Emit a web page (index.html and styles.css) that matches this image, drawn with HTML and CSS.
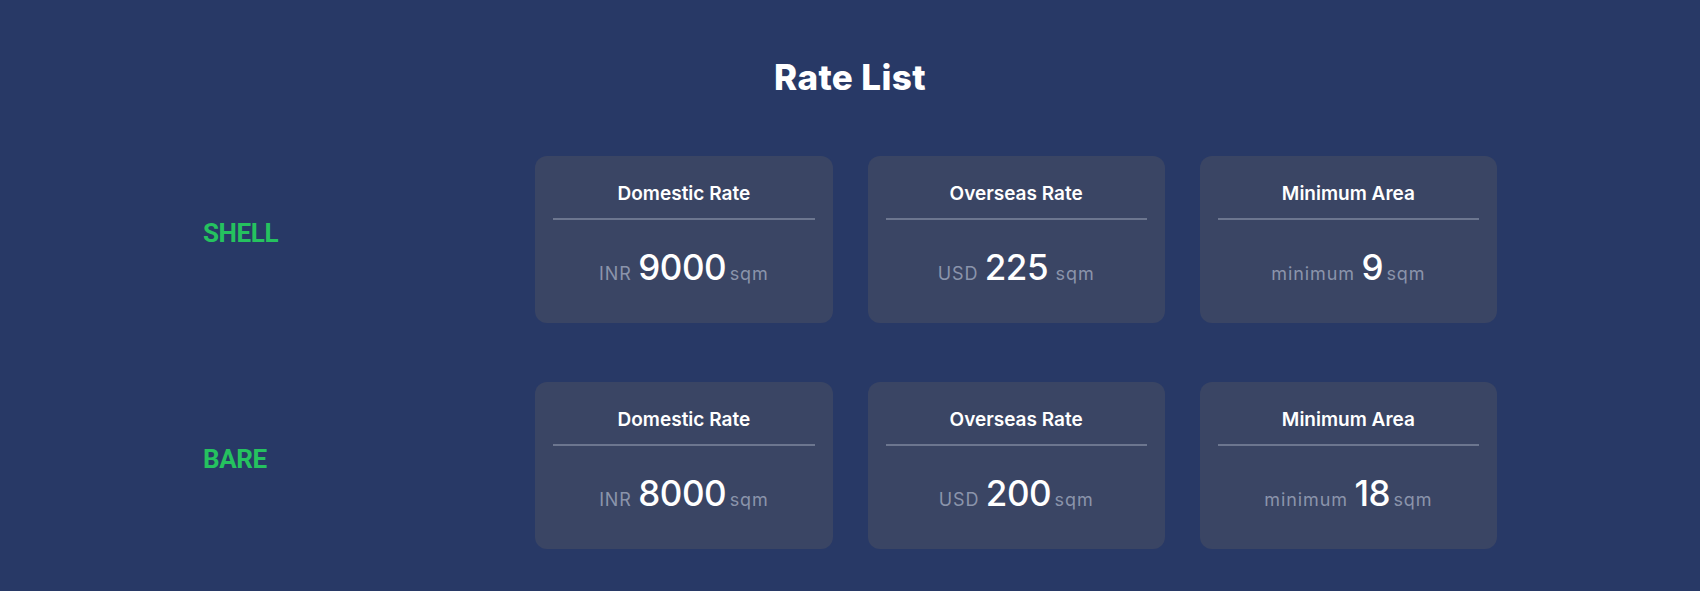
FILE: index.html
```html
<!DOCTYPE html>
<html lang="en">
<head>
<meta charset="utf-8">
<title>Rate List</title>
<link rel="stylesheet" href="styles.css">
</head>
<body>
<section class="rates">
  <h1 class="rates-title">Rate List</h1>
  <div class="rates-grid">
    <div class="rate-label">SHELL</div>
    <div class="rate-card">
      <div class="rate-card-head">Domestic Rate</div>
      <div class="rate-card-value"><span class="unit">INR</span> <span class="num">9000</span> <span class="unit unit-after">sqm</span></div>
    </div>
    <div class="rate-card">
      <div class="rate-card-head">Overseas Rate</div>
      <div class="rate-card-value"><span class="unit">USD</span> <span class="num">225</span> <span class="unit unit-after wide">sqm</span></div>
    </div>
    <div class="rate-card">
      <div class="rate-card-head">Minimum Area</div>
      <div class="rate-card-value"><span class="unit">minimum</span> <span class="num">9</span> <span class="unit unit-after">sqm</span></div>
    </div>

    <div class="rate-label">BARE</div>
    <div class="rate-card">
      <div class="rate-card-head">Domestic Rate</div>
      <div class="rate-card-value"><span class="unit">INR</span> <span class="num">8000</span> <span class="unit unit-after">sqm</span></div>
    </div>
    <div class="rate-card">
      <div class="rate-card-head">Overseas Rate</div>
      <div class="rate-card-value"><span class="unit">USD</span> <span class="num">200</span> <span class="unit unit-after">sqm</span></div>
    </div>
    <div class="rate-card">
      <div class="rate-card-head">Minimum Area</div>
      <div class="rate-card-value"><span class="unit">minimum</span> <span class="num">18</span> <span class="unit unit-after">sqm</span></div>
    </div>
  </div>
</section>
</body>
</html>
```

FILE: styles.css
```css
html, body {
  margin: 0;
  padding: 0;
}

body {
  background: #283966;
  font-family: "Inter", "Noto Sans", sans-serif;
  color: #ffffff;
  min-height: 591px;
}

.rates {
  padding-top: 57px;
}

.rates-title {
  margin: 0 0 58px;
  text-align: center;
  font-size: 35px;
  line-height: 41px;
  font-weight: 800;
  letter-spacing: 0.4px;
}

.rates-grid {
  width: 1294px;
  margin: 0 auto;
  display: grid;
  grid-template-columns: repeat(4, 1fr);
  column-gap: 35px;
  row-gap: 59px;
}

.rate-label {
  display: flex;
  align-items: center;
  padding-bottom: 14px;
  font-family: "Roboto", "Inter", sans-serif;
  font-size: 26px;
  font-weight: 700;
  letter-spacing: -0.4px;
  color: #25c25f;
}

.rate-card {
  height: 167px;
  box-sizing: border-box;
  background: #3a4564;
  border-radius: 12px;
  padding: 24px 18px 0;
}

.rate-card-head {
  text-align: center;
  font-size: 19px;
  line-height: 28px;
  font-weight: 600;
  letter-spacing: 0;
  padding-bottom: 10px;
  border-bottom: 2px solid #6c768f;
}

.rate-card-value {
  margin-top: 25px;
  text-align: center;
  line-height: 44px;
  white-space: nowrap;
}

.num {
  font-size: 35px;
  font-weight: 500;
  color: #ffffff;
  letter-spacing: -0.5px;
  margin: 0 2px;
}

.unit {
  font-size: 18px;
  color: #8b94ab;
  letter-spacing: 0.9px;
}

.unit-after {
  margin-left: -3px;
}

.unit-after.wide {
  margin-left: 1px;
}
```
